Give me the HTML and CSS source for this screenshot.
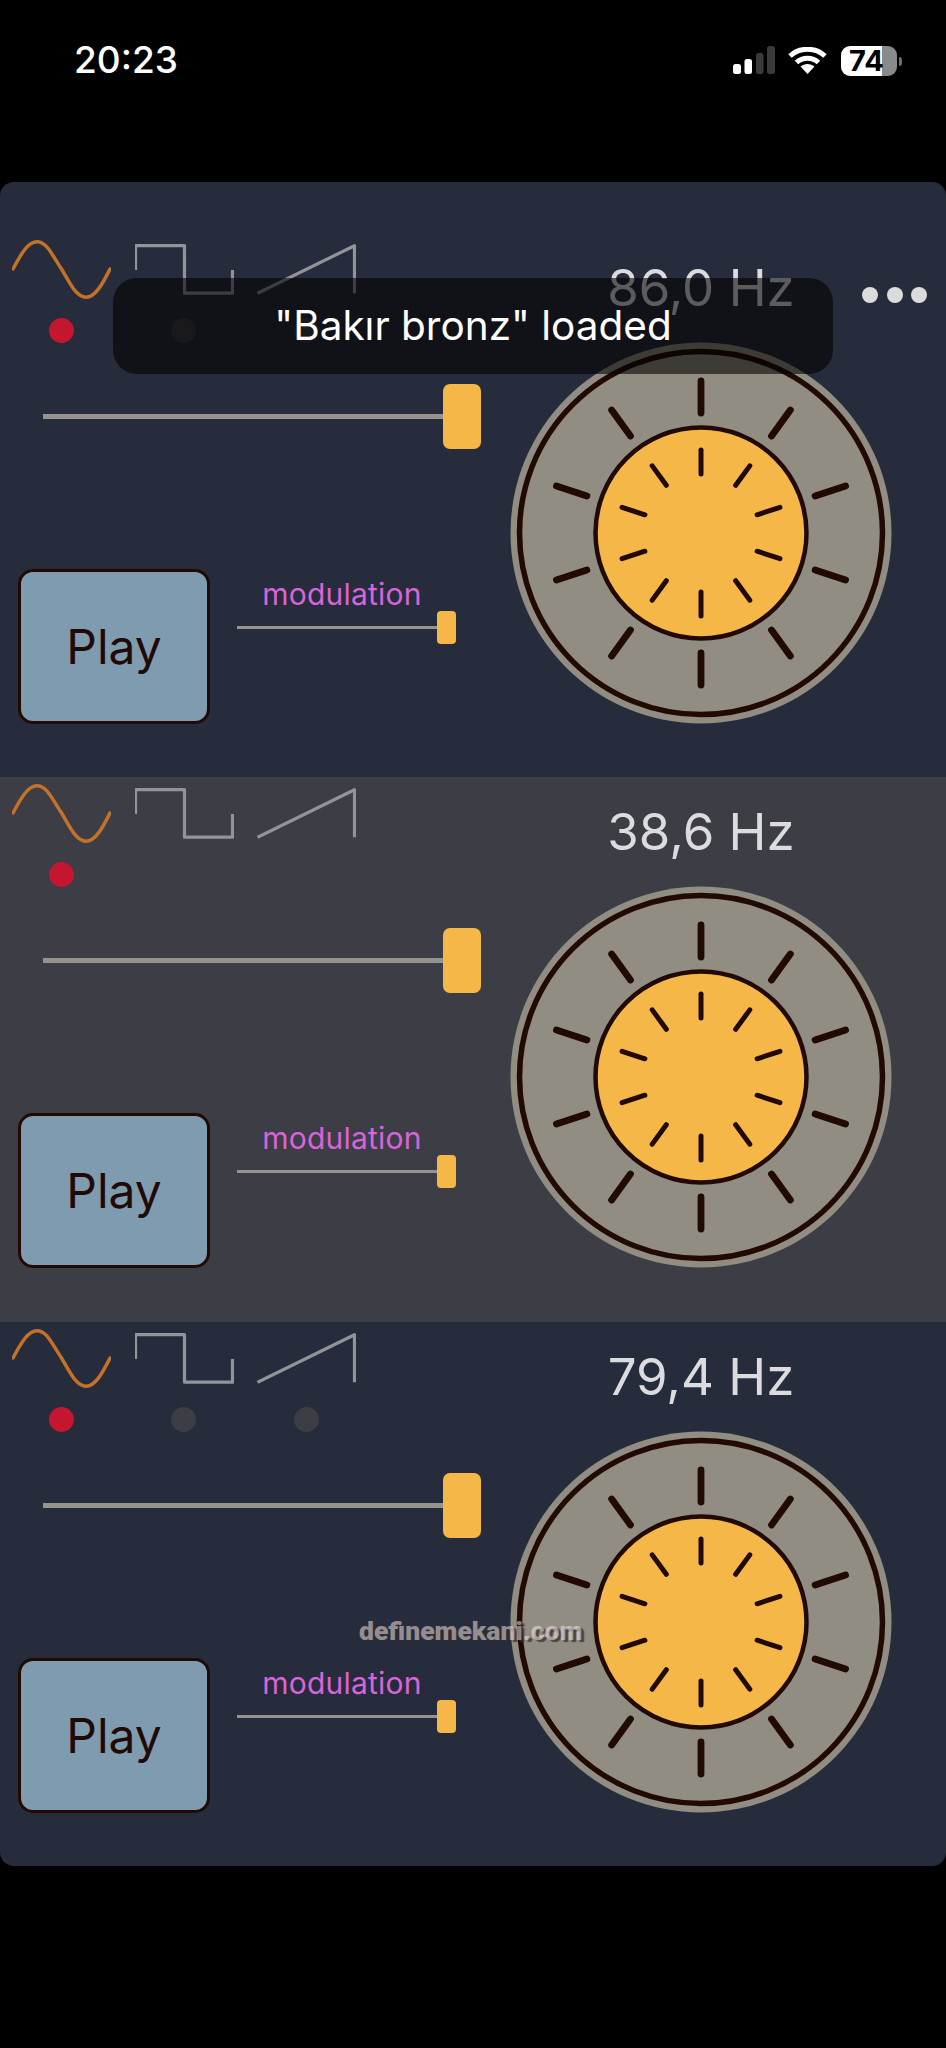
FILE: index.html
```html
<!DOCTYPE html>
<html lang="en">
<head>
    <meta charset="UTF-8">
    <meta name="viewport" content="width=device-width, initial-scale=1.0">
    <title>Oscillators</title>
    <link rel="stylesheet" href="styles.css">
</head>
<body>
    <svg class="defs" aria-hidden="true">
        <symbol id="sine" viewBox="0 0 99 60">
            <path d="M1 30C9 15 16 2.8 25 2.8C35 2.8 40 16 49.5 30C58 44 64 58.2 74 58.2C83 58.2 90 46 98 30" fill="none" stroke="#c4722a" stroke-width="3.5" stroke-linecap="round"/>
        </symbol>
        <symbol id="square" viewBox="0 0 99 60">
            <path d="M0.5 31V6.7H49.5V54.2H97.5V31" fill="none" stroke="#92949a" stroke-width="3.2" stroke-linejoin="round"/>
        </symbol>
        <symbol id="saw" viewBox="0 0 99 60">
            <path d="M0.5 54.2L97.5 6.7V54.2" fill="none" stroke="#92949a" stroke-width="3.2" stroke-linejoin="round"/>
        </symbol>
        <symbol id="knob" viewBox="-191 -191 382 382">
            <circle r="190.5" fill="#918d82"/>
            <circle r="181.5" fill="none" stroke="#220a04" stroke-width="5.5"/>
            <g stroke="#220a04" stroke-width="6.8" stroke-linecap="round">
                <line y1="-120" y2="-152"/>
                <line y1="-120" y2="-152" transform="rotate(36)"/>
                <line y1="-120" y2="-152" transform="rotate(72)"/>
                <line y1="-120" y2="-152" transform="rotate(108)"/>
                <line y1="-120" y2="-152" transform="rotate(144)"/>
                <line y1="-120" y2="-152" transform="rotate(180)"/>
                <line y1="-120" y2="-152" transform="rotate(216)"/>
                <line y1="-120" y2="-152" transform="rotate(252)"/>
                <line y1="-120" y2="-152" transform="rotate(288)"/>
                <line y1="-120" y2="-152" transform="rotate(324)"/>
            </g>
            <circle r="105.5" fill="#f5b848" stroke="#220a04" stroke-width="4.5"/>
            <g stroke="#220a04" stroke-width="5" stroke-linecap="round">
                <line y1="-59" y2="-83"/>
                <line y1="-59" y2="-83" transform="rotate(36)"/>
                <line y1="-59" y2="-83" transform="rotate(72)"/>
                <line y1="-59" y2="-83" transform="rotate(108)"/>
                <line y1="-59" y2="-83" transform="rotate(144)"/>
                <line y1="-59" y2="-83" transform="rotate(180)"/>
                <line y1="-59" y2="-83" transform="rotate(216)"/>
                <line y1="-59" y2="-83" transform="rotate(252)"/>
                <line y1="-59" y2="-83" transform="rotate(288)"/>
                <line y1="-59" y2="-83" transform="rotate(324)"/>
            </g>
        </symbol>
    </svg>

    <header class="status-bar">
        <span class="time">20:23</span>
        <div class="status-icons">
            <svg class="signal" width="42" height="28" viewBox="0 0 42 28">
                <rect x="0" y="18" width="8" height="10" rx="2.5" fill="#fff"/>
                <rect x="11.5" y="13" width="7.5" height="15" rx="2.5" fill="#fff"/>
                <rect x="23" y="7" width="7.5" height="21" rx="2.5" fill="#3a3a3a"/>
                <rect x="34" y="0" width="8" height="28" rx="2.5" fill="#3a3a3a"/>
            </svg>
            <svg class="wifi" width="39" height="27" viewBox="0 0 39 27">
                <path d="M19.5 27L12.5 19.5C16.5 16 22.5 16 26.5 19.5Z" fill="#fff"/>
                <path d="M8.5 15.5C14.5 9.8 24.5 9.8 30.5 15.5" fill="none" stroke="#fff" stroke-width="5"/>
                <path d="M2 9C11.5 0 27.5 0 37 9" fill="none" stroke="#fff" stroke-width="5"/>
            </svg>
            <div class="battery">
                <div class="battery-body"><span>74</span></div>
                <div class="battery-nub"></div>
            </div>
        </div>
    </header>

    <main class="panel">
        <section class="osc">
            <div class="osc-left">
                <div class="waves">
                    <svg class="wave"><use href="#sine"/></svg>
                    <svg class="wave"><use href="#square"/></svg>
                    <svg class="wave"><use href="#saw"/></svg>
                </div>
                <div class="dots">
                    <span class="dot on"></span><span class="dot"></span><span class="dot"></span>
                </div>
                <div class="slider">
                    <div class="track"></div>
                    <div class="thumb"></div>
                </div>
                <div class="controls">
                    <button class="play">Play</button>
                    <div class="mod">
                        <div class="mod-label">modulation</div>
                        <div class="mod-slider">
                            <div class="mod-track"></div>
                            <div class="mod-thumb"></div>
                        </div>
                    </div>
                </div>
            </div>
            <div class="osc-right">
                <div class="freq">86,0 Hz</div>
                <svg class="knob"><use href="#knob"/></svg>
            </div>
        </section>

        <section class="osc alt">
            <div class="osc-left">
                <div class="waves">
                    <svg class="wave"><use href="#sine"/></svg>
                    <svg class="wave"><use href="#square"/></svg>
                    <svg class="wave"><use href="#saw"/></svg>
                </div>
                <div class="dots">
                    <span class="dot on"></span><span class="dot"></span><span class="dot"></span>
                </div>
                <div class="slider">
                    <div class="track"></div>
                    <div class="thumb"></div>
                </div>
                <div class="controls">
                    <button class="play">Play</button>
                    <div class="mod">
                        <div class="mod-label">modulation</div>
                        <div class="mod-slider">
                            <div class="mod-track"></div>
                            <div class="mod-thumb"></div>
                        </div>
                    </div>
                </div>
            </div>
            <div class="osc-right">
                <div class="freq">38,6 Hz</div>
                <svg class="knob"><use href="#knob"/></svg>
            </div>
        </section>

        <section class="osc">
            <div class="osc-left">
                <div class="waves">
                    <svg class="wave"><use href="#sine"/></svg>
                    <svg class="wave"><use href="#square"/></svg>
                    <svg class="wave"><use href="#saw"/></svg>
                </div>
                <div class="dots">
                    <span class="dot on"></span><span class="dot"></span><span class="dot"></span>
                </div>
                <div class="slider">
                    <div class="track"></div>
                    <div class="thumb"></div>
                </div>
                <div class="controls">
                    <button class="play">Play</button>
                    <div class="mod">
                        <div class="mod-label">modulation</div>
                        <div class="mod-slider">
                            <div class="mod-track"></div>
                            <div class="mod-thumb"></div>
                        </div>
                    </div>
                </div>
            </div>
            <div class="osc-right">
                <div class="freq">79,4 Hz</div>
                <svg class="knob"><use href="#knob"/></svg>
            </div>
        </section>

        <div class="more"><span></span><span></span><span></span></div>
        <div class="toast">"Bakır bronz" loaded</div>
    </main>

    <div class="watermark">definemekani.com</div>
</body>
</html>
```

FILE: styles.css
```css
html, body {
    margin: 0;
    height: 2048px;
    overflow: hidden;
}
body {
    position: relative;
    background: #000;
    font-family: Inter, "Noto Sans", sans-serif;
}
.defs {
    display: none;
}

/* status bar */
.status-bar {
    height: 182px;
    box-sizing: border-box;
    padding: 39px 44px 0 74px;
    display: flex;
    justify-content: space-between;
    align-items: flex-start;
    color: #fff;
}
.time {
    font-size: 37px;
    font-weight: 500;
    line-height: 42px;
}
.status-icons {
    display: flex;
    align-items: flex-start;
    margin-top: 7px;
}
.signal {
    display: block;
}
.wifi {
    display: block;
    margin: 1px 14px 0 13px;
}
.battery {
    display: flex;
    align-items: center;
}
.battery-body {
    width: 56px;
    height: 30px;
    border-radius: 9px;
    background: linear-gradient(to right, #fff 41px, #8a8a8a 41px);
    color: #000;
    font-size: 29px;
    font-weight: 700;
    line-height: 30px;
    padding-left: 8px;
    box-sizing: border-box;
    white-space: nowrap;
}
.battery-nub {
    width: 3px;
    height: 9px;
    margin-left: 2px;
    background: #6f6f6f;
    border-radius: 0 3px 3px 0;
}

/* main panel */
.panel {
    position: relative;
    height: 1684px;
    box-sizing: border-box;
    padding-top: 50.5px;
    background: #262c3b;
    border-radius: 14px;
    overflow: hidden;
}
.osc {
    height: 544.5px;
    display: flex;
}
.osc.alt {
    background: #3c3d45;
}
.osc-left {
    width: 510px;
    flex: none;
}
.osc-right {
    width: 382px;
    flex: none;
}
.waves {
    display: flex;
    gap: 23.5px;
    padding: 6px 0 0 12px;
}
.wave {
    width: 99px;
    height: 60px;
    display: block;
}
.dots {
    display: flex;
    gap: 97.5px;
    padding-left: 48.5px;
    margin-top: 19px;
}
.dot {
    width: 25px;
    height: 25px;
    border-radius: 50%;
    background: #3c3d45;
}
.dot.on {
    background: #c4172f;
}
.slider {
    display: flex;
    align-items: center;
    margin-top: 41px;
    padding-left: 43px;
}
.track {
    width: 400px;
    height: 5px;
    background: #95938c;
}
.thumb {
    width: 38px;
    height: 65px;
    border-radius: 7px;
    background: #f5b848;
}
.controls {
    display: flex;
    margin-top: 120px;
    padding-left: 18px;
}
.play {
    width: 192px;
    height: 155px;
    box-sizing: border-box;
    border: 3px solid #220a04;
    border-radius: 15px;
    background: #7f9bb0;
    color: #220a04;
    font-family: inherit;
    font-size: 48px;
    padding: 0;
}
.mod {
    margin-left: 27px;
    padding-top: 8px;
}
.mod-label {
    width: 210px;
    height: 34px;
    line-height: 35px;
    text-align: center;
    color: #d964d9;
    font-size: 30px;
    letter-spacing: 0.2px;
}
.mod-slider {
    display: flex;
    align-items: center;
}
.mod-track {
    width: 200px;
    height: 3px;
    background: #95938c;
}
.mod-thumb {
    width: 19px;
    height: 33px;
    border-radius: 4px;
    background: #f5b848;
}
.freq {
    height: 60px;
    margin: 25px 0 24px;
    line-height: 60px;
    text-align: center;
    color: #dcdcdf;
    font-size: 51px;
}
.knob {
    width: 382px;
    height: 382px;
    display: block;
}

/* things that lie over the rows */
.more {
    position: absolute;
    top: 105px;
    left: 862px;
    display: flex;
    gap: 8.5px;
}
.more span {
    width: 16px;
    height: 16px;
    border-radius: 50%;
    background: #dcdcdc;
}
.toast {
    position: absolute;
    top: 96px;
    left: 113px;
    width: 720px;
    height: 96px;
    border-radius: 24px;
    background: rgba(0, 0, 0, 0.58);
    color: #fff;
    font-size: 40.5px;
    line-height: 96px;
    text-align: center;
}
.watermark {
    position: absolute;
    top: 1612px;
    left: 359px;
    font-family: Roboto, sans-serif;
    font-weight: 900;
    font-size: 26.5px;
    line-height: 38px;
    color: rgba(255, 240, 240, 0.5);
    text-shadow: 3px 2px 1px rgba(50, 45, 45, 0.75);
}
```
